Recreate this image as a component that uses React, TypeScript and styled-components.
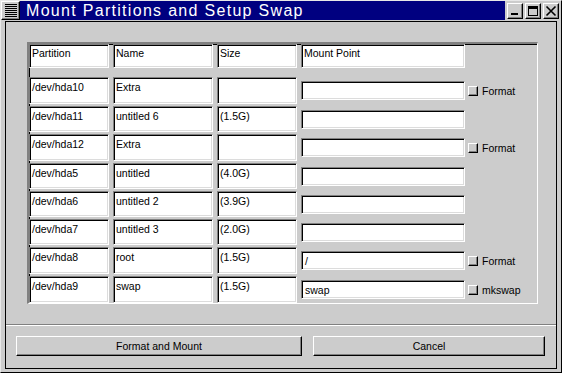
import React from "react";
import styled, { createGlobalStyle, css } from "styled-components";

const BG = "#cccccc";
const NAVY = "#000080";

const GlobalStyle = createGlobalStyle`
  html, body {
    margin: 0;
    padding: 0;
    background: ${BG};
  }
  * {
    box-sizing: border-box;
  }
`;

interface PartitionRow {
  dev: string;
  name: string;
  size: string;
  mount?: string;
  check?: string;
}

const ROWS: PartitionRow[] = [
  { dev: "/dev/hda10", name: "Extra", size: "", mount: "", check: "Format" },
  { dev: "/dev/hda11", name: "untitled 6", size: "(1.5G)", mount: "" },
  { dev: "/dev/hda12", name: "Extra", size: "", mount: "", check: "Format" },
  { dev: "/dev/hda5", name: "untitled", size: "(4.0G)", mount: "" },
  { dev: "/dev/hda6", name: "untitled 2", size: "(3.9G)", mount: "" },
  { dev: "/dev/hda7", name: "untitled 3", size: "(2.0G)", mount: "" },
  { dev: "/dev/hda8", name: "root", size: "(1.5G)", mount: "/", check: "Format" },
  { dev: "/dev/hda9", name: "swap", size: "(1.5G)", mount: "swap", check: "mkswap" },
];

const sunken = css`
  border-style: solid;
  border-width: 1px;
  border-color: #808080 #ffffff #ffffff #808080;
  box-shadow: inset 1px 1px 0 #000000, inset -1px -1px 0 #dcdcdc;
`;

const raised = css`
  border-style: solid;
  border-width: 1px;
  border-color: #ffffff #000000 #000000 #ffffff;
  box-shadow: inset -1px -1px 0 #808080;
`;

const Window = styled.div`
  width: 562px;
  height: 373px;
  display: flex;
  flex-direction: column;
  background: ${BG};
  border: 1px solid;
  border-color: #e8e8e8 #000000 #000000 #e8e8e8;
  font-family: "Liberation Sans", Arial, sans-serif;
  font-size: 10.5px;
  color: #000;
`;

const TitleBar = styled.div`
  height: 19px;
  display: flex;
  align-items: stretch;
`;

const MenuButton = styled.div`
  width: 19px;
  ${raised};
  display: flex;
  flex-direction: column;
  justify-content: center;
  gap: 1px;
  padding: 0 2px 0 3px;
`;

const MenuLine = styled.div`
  height: 1px;
  background: #000;
`;

const TitleText = styled.div`
  flex: 1;
  background: ${NAVY};
  color: #fff;
  font-size: 16px;
  letter-spacing: 1.3px;
  line-height: 19px;
  padding-left: 6px;
  white-space: nowrap;
`;

const TitleButtons = styled.div`
  display: flex;
  align-items: center;
  gap: 2px;
  padding: 0 2px 0 2px;
`;

const TitleButton = styled.div`
  width: 16px;
  height: 16px;
  ${raised};
  display: flex;
  align-items: center;
  justify-content: center;
`;

const Client = styled.div`
  flex: 1;
  margin: 1px 4px 3px 4px;
  border: 1px solid #000;
  display: flex;
  flex-direction: column;
`;

const Frame = styled.div`
  margin: 20px 18px 0 21px;
  border-width: 2px;
  border-style: solid;
  border-color: #808080 #ffffff #ffffff #808080;
  box-shadow: inset 1px 1px 0 #000000;
  border-right-width: 1px;
  border-bottom-width: 1px;
`;

const Grid = styled.div`
  display: grid;
  grid-template-columns: 80px 100px 80px 164px 1fr;
  column-gap: 4px;
  row-gap: 2px;
`;

const Cell = styled.div<{ $header?: boolean; $tall?: boolean }>`
  ${sunken};
  background: #fff;
  height: ${({ $header, $tall }) => ($header ? 24 : $tall ? 27 : 26)}px;
  margin-bottom: ${({ $header }) => ($header ? 7 : 0)}px;
  padding: ${({ $header }) => ($header ? "2px 2px" : "3px 2px")};
  line-height: 12px;
  white-space: nowrap;
  overflow: hidden;
`;

const EntryWrap = styled.div<{ $tall?: boolean }>`
  height: ${({ $tall }) => ($tall ? 27 : 26)}px;
  display: flex;
  align-items: center;
`;

const Entry = styled.div`
  ${sunken};
  background: #fff;
  width: 100%;
  height: 19px;
  padding: 3px 3px 0 3px;
  line-height: 12px;
  white-space: nowrap;
`;

const CheckWrap = styled.div`
  display: flex;
  align-items: center;
  gap: 4px;
  margin-left: -1px;
`;

const CheckBox = styled.div`
  width: 10px;
  height: 10px;
  ${raised};
  background: ${BG};
`;

const Separator = styled.div`
  margin-top: 20px;
  height: 2px;
  border-top: 1px solid #808080;
  border-bottom: 1px solid #ffffff;
`;

const ButtonRow = styled.div`
  display: flex;
  gap: 11px;
  padding: 10px 10px 0 10px;
`;

const PushButton = styled.div<{ $width: number }>`
  width: ${({ $width }) => $width}px;
  height: 20px;
  ${raised};
  background: ${BG};
  display: flex;
  align-items: center;
  justify-content: center;
  font-size: 10.5px;
`;

const App: React.FC = () => {
  return (
    <>
      <GlobalStyle />
      <Window>
        <TitleBar>
          <MenuButton>
            {Array.from({ length: 7 }).map((_, i) => (
              <MenuLine key={`menu-line-${i}`} />
            ))}
          </MenuButton>
          <TitleText>Mount Partitions and Setup Swap</TitleText>
          <TitleButtons>
            <TitleButton>
              <svg width="12" height="12" viewBox="0 0 12 12">
                <rect x="2" y="8" width="7" height="2" fill="#000" />
              </svg>
            </TitleButton>
            <TitleButton>
              <svg width="12" height="12" viewBox="0 0 12 12">
                <rect x="1.5" y="1.5" width="9" height="9" fill="none" stroke="#000" />
                <rect x="1" y="1" width="10" height="3" fill="#000" />
              </svg>
            </TitleButton>
            <TitleButton>
              <svg width="12" height="12" viewBox="0 0 12 12">
                <path d="M1.5 1.5 L10.5 10.5 M10.5 1.5 L1.5 10.5" stroke="#000" strokeWidth="1.6" />
              </svg>
            </TitleButton>
          </TitleButtons>
        </TitleBar>
        <Client>
          <Frame>
            <Grid>
              <Cell $header>Partition</Cell>
              <Cell $header>Name</Cell>
              <Cell $header>Size</Cell>
              <Cell $header>Mount Point</Cell>
              <div />
              {ROWS.map((row) => {
                const tall = !!row.check;
                return (
                  <React.Fragment key={row.dev}>
                    <Cell $tall={tall}>{row.dev}</Cell>
                    <Cell $tall={tall}>{row.name}</Cell>
                    <Cell $tall={tall}>{row.size}</Cell>
                    <EntryWrap $tall={tall}>
                      <Entry>{row.mount}</Entry>
                    </EntryWrap>
                    {row.check ? (
                      <CheckWrap>
                        <CheckBox />
                        <span>{row.check}</span>
                      </CheckWrap>
                    ) : (
                      <div />
                    )}
                  </React.Fragment>
                );
              })}
            </Grid>
          </Frame>
          <Separator />
          <ButtonRow>
            <PushButton $width={286}>Format and Mount</PushButton>
            <PushButton $width={232}>Cancel</PushButton>
          </ButtonRow>
        </Client>
      </Window>
    </>
  );
};

export default App;
